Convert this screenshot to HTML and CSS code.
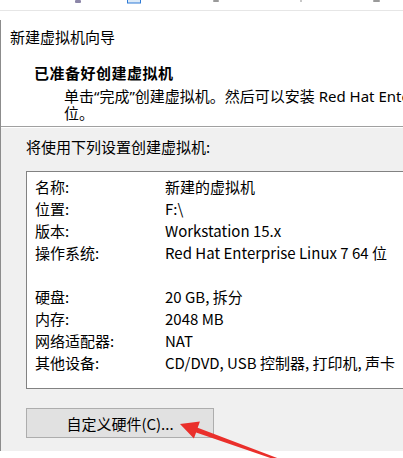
FILE: index.html
```html
<!DOCTYPE html>
<html lang="zh-CN">
<head>
    <meta charset="UTF-8">
    <meta name="viewport" content="width=device-width, initial-scale=1.0">
    <title>新建虚拟机向导</title>
    <link rel="stylesheet" href="styles.css">
</head>
<body>
    <div class="toolbar">
        <svg width="403" height="10" viewBox="0 0 403 10">
            <rect x="75" y="0" width="6" height="3" rx="1" fill="#8c86a8"/>
            <rect x="127.5" y="-1" width="13" height="4" fill="#dceaf8" stroke="#2f7bd6"/>
            <rect x="213" y="0" width="6" height="2" rx="1" fill="#9a9a9a"/>
            <rect x="300" y="0" width="2" height="2" fill="#c8c8c8"/>
            <rect x="373" y="0" width="7" height="2" rx="1" fill="#9a9a9a"/>
        </svg>
    </div>

    <div class="window">
        <div class="header">
            <div class="title">新建虚拟机向导</div>
            <div class="heading">已准备好创建虚拟机</div>
            <div class="desc">单击“完成”创建虚拟机。然后可以安装 Red Hat Enterprise Linux 7 64<br>位。</div>
        </div>

        <div class="content">
            <div class="intro">将使用下列设置创建虚拟机:</div>
            <div class="summary">
                <div class="row"><span class="label">名称:</span><span class="value">新建的虚拟机</span></div>
                <div class="row"><span class="label">位置:</span><span class="value">F:\</span></div>
                <div class="row"><span class="label">版本:</span><span class="value">Workstation 15.x</span></div>
                <div class="row"><span class="label">操作系统:</span><span class="value">Red Hat Enterprise Linux 7 64 位</span></div>
                <div class="row"></div>
                <div class="row"><span class="label">硬盘:</span><span class="value">20 GB, 拆分</span></div>
                <div class="row"><span class="label">内存:</span><span class="value">2048 MB</span></div>
                <div class="row"><span class="label">网络适配器:</span><span class="value">NAT</span></div>
                <div class="row"><span class="label">其他设备:</span><span class="value">CD/DVD, USB 控制器, 打印机, 声卡</span></div>
            </div>
            <button class="btn">自定义硬件(C)...</button>
        </div>
    </div>

    <!-- red annotation arrow pointing at the button -->
    <svg class="arrow" width="403" height="458" viewBox="0 0 403 458">
        <polygon fill="#ea2f2b" points="180,424 199.9,421.6 197.7,427.7 285.3,461.1 284.7,462.9 196.1,432.5 193.9,438.6"/>
    </svg>
</body>
</html>
```

FILE: styles.css
```css
body { margin: 0; width: 403px; height: 458px; overflow: hidden; position: relative; background: #fff; font-family: "Noto Sans CJK SC", sans-serif; font-size: 15px; color: #000; }
.toolbar { height: 10px; border-bottom: 1px solid #e6e6e6; }
.toolbar svg { display: block; }
.window { margin-top: 9px; border-left: 1px solid #8c8c8c; }
.header { background: #fff; padding: 7px 0 4px 9px; border-bottom: 1px solid #a0a0a0; white-space: nowrap; overflow: hidden; }
.title { line-height: 20px; }
.heading { margin-top: 16px; padding-left: 24px; line-height: 20px; font-weight: bold; letter-spacing: 0.5px; }
.desc { margin-top: 5px; padding-left: 54px; line-height: 17px; font-family: "Noto Sans", "Noto Sans CJK SC", sans-serif; }
.content { background: #f0f0f0; border-top: 1px solid #fff; padding: 9px 0 13px 25px; overflow: hidden; }
.intro { line-height: 20px; }
.summary { margin-top: 14px; margin-right: -30px; height: 218px; box-sizing: border-box; background: #fff; border: 1px solid #828282; padding: 4px 0 0 8px; }
.row { display: flex; height: 22px; line-height: 22px; white-space: nowrap; }
.label { width: 130px; }
.btn { display: block; margin-top: 19px; width: 188px; height: 30px; padding: 0; background: #e1e1e1; border: 1px solid #adadad; font-family: inherit; font-size: 15px; color: #000; }
.arrow { position: absolute; left: 0; top: 0; pointer-events: none; }
```
